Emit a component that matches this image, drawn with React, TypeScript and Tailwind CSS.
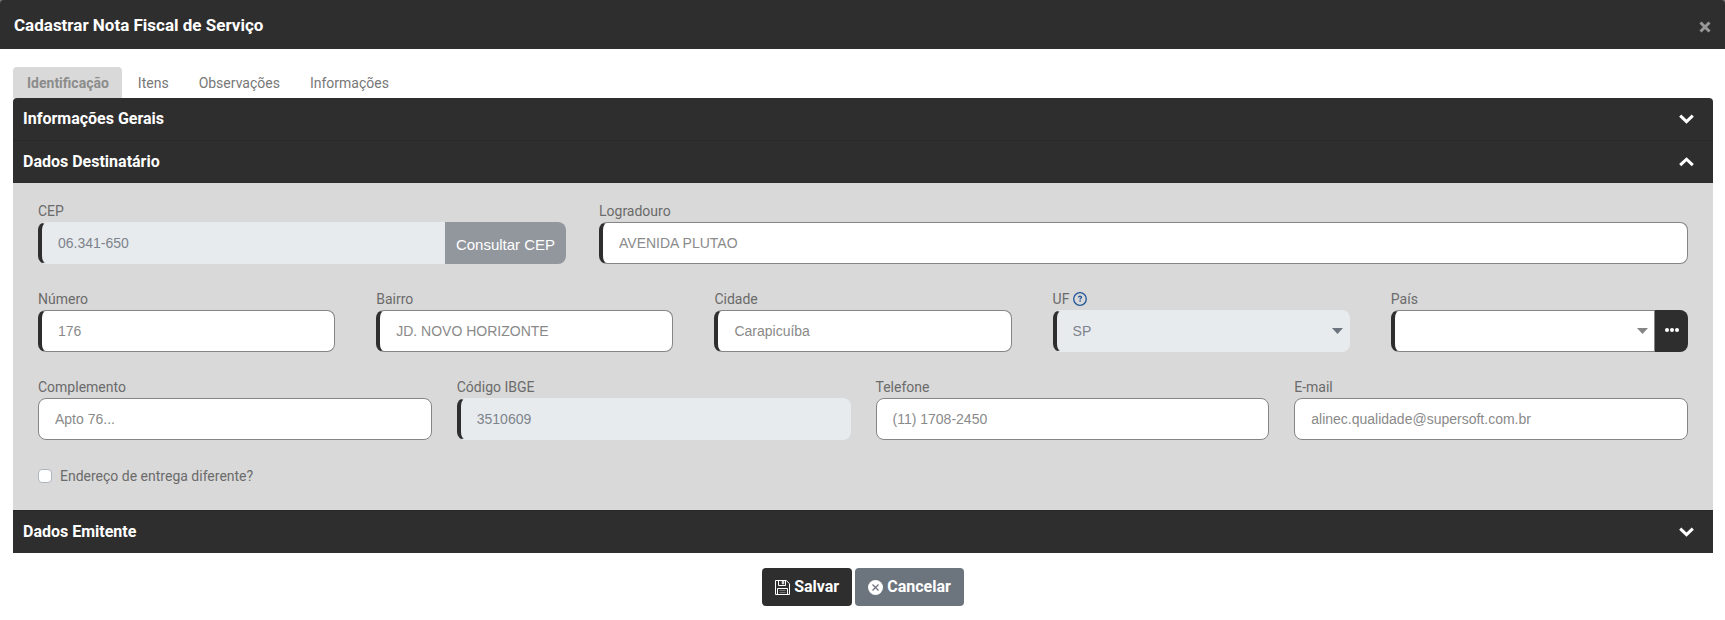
import { useState } from "react";
import type { InputHTMLAttributes, ReactNode } from "react";
import clsx from "clsx";

const tabs = ["Identificação", "Itens", "Observações", "Informações"];

const control =
  "block h-[42px] w-full min-w-0 appearance-none border px-4 text-sm outline-none";

function controlStyle(required?: boolean, locked?: boolean) {
  return clsx(
    control,
    locked
      ? "border-transparent bg-[#e8ebee] text-[#7d838b]"
      : "border-[#858585] bg-white text-[#8a8a8a]",
    required && "border-l-4 border-l-[#2e2e2e]"
  );
}

type FieldProps = {
  id: string;
  label: string;
  hint?: ReactNode;
  children: ReactNode;
};

function Field({ id, label, hint, children }: FieldProps) {
  return (
    <div className="min-w-0">
      <div className="mb-0.5 flex h-[19px] items-center gap-1 font-[Roboto,sans-serif] text-sm text-[#6b6b6b]">
        <label htmlFor={id}>{label}</label>
        {hint}
      </div>
      {children}
    </div>
  );
}

type TextFieldProps = InputHTMLAttributes<HTMLInputElement> & {
  id: string;
  label: string;
};

function TextField({ id, label, required, readOnly, ...rest }: TextFieldProps) {
  return (
    <Field id={id} label={label}>
      <input
        id={id}
        readOnly={readOnly}
        className={clsx(
          controlStyle(required, readOnly),
          "rounded-lg placeholder:text-[#8a8a8a]"
        )}
        {...rest}
      />
    </Field>
  );
}

function Caret({ className }: { className: string }) {
  return (
    <svg
      viewBox="0 0 11 6"
      className={clsx("pointer-events-none absolute h-[6px] w-[11px]", className)}
      fill="currentColor"
      aria-hidden="true"
    >
      <path d="M0 0h11L5.5 6z" />
    </svg>
  );
}

function Chevron({ up }: { up?: boolean }) {
  return (
    <svg
      viewBox="0 0 15 10"
      className="h-[10px] w-[15px]"
      fill="none"
      stroke="currentColor"
      strokeWidth="3"
      aria-hidden="true"
    >
      <path d={up ? "M1.2 8.2l6.3-6 6.3 6" : "M1.2 1.6l6.3 6 6.3-6"} />
    </svg>
  );
}

function HelpIcon() {
  return (
    <svg viewBox="0 0 14 14" className="size-[14px] text-[#1f5597]" fill="none" stroke="currentColor" aria-hidden="true">
      <circle cx="7" cy="7" r="6.3" strokeWidth="1.3" />
      <path d="M5.5 5.4c0-.8.6-1.3 1.5-1.3s1.5.5 1.5 1.2c0 1-1.4 1-1.4 2.1" strokeWidth="1.3" />
      <path d="M7.1 8.3v1.4" strokeWidth="1.3" />
    </svg>
  );
}

function SaveIcon() {
  return (
    <svg viewBox="0 0 15 15" className="size-[15px]" fill="none" stroke="currentColor" aria-hidden="true">
      <path d="M.5.5h10.8l3.2 3.2v10.8H.5z" />
      <path d="M3.5.5v5h7v-5" />
      <path d="M7.3.5v3.3h1.4V.5" />
      <path d="M2.5 14.5v-6h10v6" />
      <path d="M4.5 10.5h6M4.5 12.5h6" opacity=".35" />
    </svg>
  );
}

function CancelIcon() {
  return (
    <svg viewBox="0 0 15 15" className="size-[15px]" aria-hidden="true">
      <circle cx="7.5" cy="7.5" r="7.5" fill="currentColor" />
      <path d="M4.5 4.5l6 6M10.5 4.5l-6 6" stroke="#6c757d" strokeWidth="1.3" />
    </svg>
  );
}

type SectionProps = {
  title: string;
  open: boolean;
  onToggle: () => void;
  children?: ReactNode;
};

function Section({ title, open, onToggle, children }: SectionProps) {
  return (
    <section className="border-t border-[#292929] first:border-t-0">
      <h2>
        <button
          type="button"
          aria-expanded={open}
          onClick={onToggle}
          className="flex h-[42px] w-full items-center justify-between bg-[#2e2e2e] pr-[19px] pl-[10px] text-base font-bold text-white"
        >
          {title}
          <Chevron up={open} />
        </button>
      </h2>
      {open && children}
    </section>
  );
}

function Recipient() {
  return (
    <div className="bg-[#d9d9d9] px-[25px] pt-[18px] pb-[27px] font-['Liberation_Sans',Arial,sans-serif]">
      <div className="grid grid-cols-[16fr_33fr] gap-x-[33px]">
        <Field id="cep" label="CEP">
          <div className="flex">
            <input
              id="cep"
              readOnly
              defaultValue="06.341-650"
              className={clsx(controlStyle(true, true), "flex-1 rounded-l-lg")}
            />
            <button
              type="button"
              className="h-[42px] w-[121px] shrink-0 rounded-r-lg bg-[#92979e] pt-1 text-[15px] text-white"
            >
              Consultar CEP
            </button>
          </div>
        </Field>
        <TextField id="logradouro" label="Logradouro" required defaultValue="AVENIDA PLUTAO" />
      </div>

      <div className="mt-[25px] grid grid-cols-5 gap-x-[41px]">
        <TextField id="numero" label="Número" required defaultValue="176" />
        <TextField id="bairro" label="Bairro" required defaultValue="JD. NOVO HORIZONTE" />
        <TextField id="cidade" label="Cidade" required defaultValue="Carapicuíba" />
        <Field id="uf" label="UF" hint={<HelpIcon />}>
          <div className="relative">
            <select id="uf" className={clsx(controlStyle(true, true), "rounded-lg")}>
              <option>SP</option>
            </select>
            <Caret className="top-[18px] right-[7px] text-[#6c757d]" />
          </div>
        </Field>
        <Field id="pais" label="País">
          <div className="flex">
            <div className="relative flex-1">
              <select id="pais" className={clsx(controlStyle(true), "rounded-l-lg")}>
                <option></option>
              </select>
              <Caret className="top-[18px] right-[7px] text-[#858585]" />
            </div>
            <button
              type="button"
              aria-label="Buscar país"
              className="flex w-[33px] items-center justify-center gap-px rounded-r-lg bg-[#2e2e2e] pb-0.5"
            >
              <span className="size-1 rounded-full bg-white" />
              <span className="size-1 rounded-full bg-white" />
              <span className="size-1 rounded-full bg-white" />
            </button>
          </div>
        </Field>
      </div>

      <div className="mt-[25px] grid grid-cols-4 gap-x-[25px]">
        <TextField id="complemento" label="Complemento" placeholder="Apto 76..." />
        <TextField id="ibge" label="Código IBGE" required readOnly defaultValue="3510609" />
        <TextField id="telefone" label="Telefone" type="tel" defaultValue="(11) 1708-2450" />
        <TextField id="email" label="E-mail" type="email" defaultValue="alinec.qualidade@supersoft.com.br" />
      </div>

      <label className="mt-[29px] flex h-[14px] w-fit items-center gap-2 font-[Roboto,sans-serif] text-sm text-[#6b6b6b]">
        <input
          type="checkbox"
          className="size-[14px] appearance-none rounded-[4px] border border-[#adb5bd] bg-white checked:bg-[#2e2e2e]"
        />
        Endereço de entrega diferente?
      </label>
    </div>
  );
}

export default function App() {
  const [tab, setTab] = useState(0);
  const [open, setOpen] = useState(1);
  const toggle = (i: number) => setOpen(open === i ? -1 : i);

  return (
    <div className="min-h-screen bg-white font-[Roboto,sans-serif]">
      <div className="bg-[#777777]">
        <header className="flex h-[49px] items-center justify-between rounded-t-[4px] bg-[#2e2e2e] px-[14px]">
          <h1 className="pt-0.5 text-[17px] font-bold text-white">Cadastrar Nota Fiscal de Serviço</h1>
          <button type="button" aria-label="Fechar" className="pt-1 text-[#979797]">
            <svg viewBox="0 0 12 12" className="size-3" stroke="currentColor" strokeWidth="3" aria-hidden="true">
              <path d="M1.5 1.5l9 9M10.5 1.5l-9 9" />
            </svg>
          </button>
        </header>
      </div>

      <main className="pt-[18px] pr-3 pl-[13px]">
        <nav className="flex">
          {tabs.map((name, i) => (
            <button
              key={name}
              type="button"
              onClick={() => setTab(i)}
              className={clsx(
                "h-[31px] rounded-t-[4px] text-sm",
                i === tab
                  ? "mr-px bg-[#d9d9d9] pr-[13px] pl-[14px] font-bold text-[#8c8c8c]"
                  : "px-[15px] text-[#777777]"
              )}
            >
              {name}
            </button>
          ))}
        </nav>

        <div className="overflow-hidden rounded-t-[4px]">
          <Section title="Informações Gerais" open={open === 0} onToggle={() => toggle(0)} />
          <Section title="Dados Destinatário" open={open === 1} onToggle={() => toggle(1)}>
            <Recipient />
          </Section>
          <Section title="Dados Emitente" open={open === 2} onToggle={() => toggle(2)} />
        </div>

        <footer className="mt-[15px] flex justify-center gap-[3px] text-base font-bold text-white">
          <button type="button" className="flex h-[38px] items-center gap-1 rounded-[4px] bg-[#2e2e2e] px-[13px]">
            <SaveIcon />
            Salvar
          </button>
          <button type="button" className="flex h-[38px] items-center gap-1 rounded-[4px] bg-[#6c757d] px-[13px]">
            <CancelIcon />
            Cancelar
          </button>
        </footer>
      </main>
    </div>
  );
}
